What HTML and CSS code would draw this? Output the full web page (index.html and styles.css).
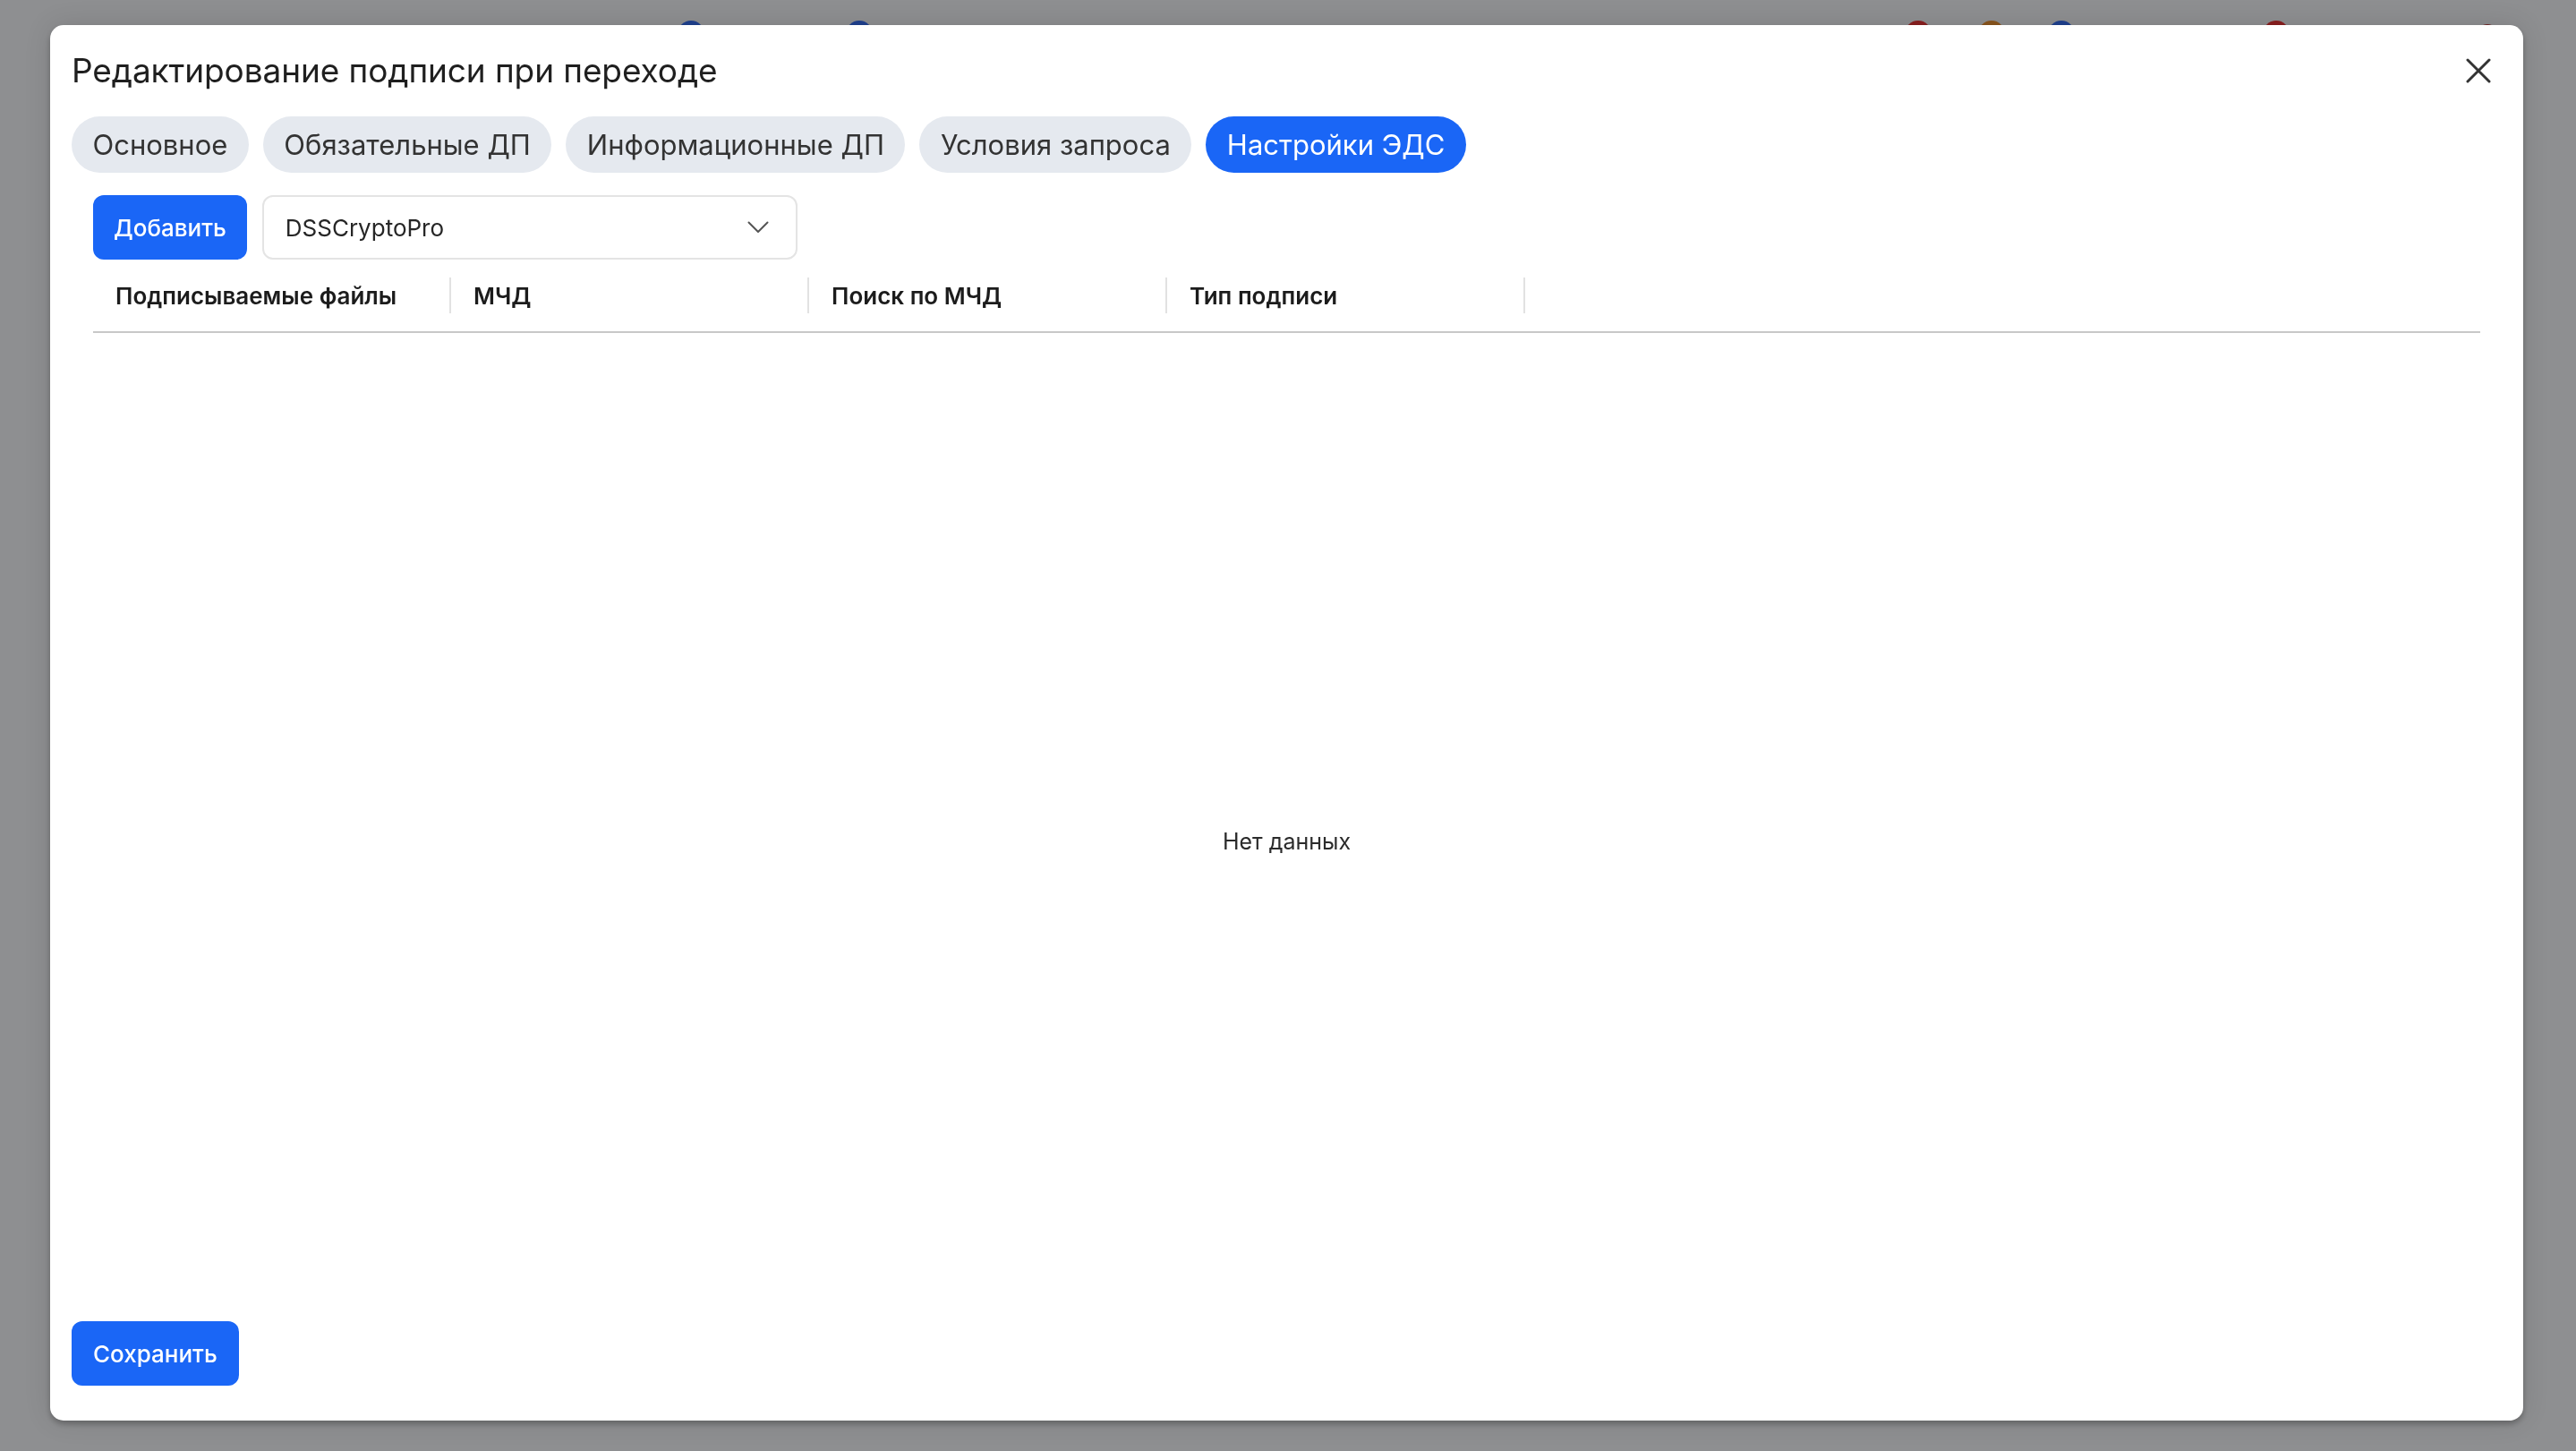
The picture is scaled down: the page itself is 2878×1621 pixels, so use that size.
FILE: index.html
```html
<!DOCTYPE html>
<html lang="ru">
<head>
<meta charset="utf-8">
<title>Редактирование подписи при переходе</title>
<link rel="stylesheet" href="styles.css">
</head>
<body>
<div class="page-behind">
  <div class="dots">
    <span class="dot dot-blue d1"></span>
    <span class="dot dot-blue d2"></span>
    <span class="dot dot-red d3"></span>
    <span class="dot dot-orange d4"></span>
    <span class="dot dot-blue d5"></span>
    <span class="dot dot-red d6"></span>
    <span class="dot dot-dark d7"></span>
  </div>
</div>
<div class="modal">
  <div class="modal-header">
    <h1 class="modal-title">Редактирование подписи при переходе</h1>
    <button class="close-btn" aria-label="Закрыть">
      <svg width="28" height="28" viewBox="0 0 28 28"><path d="M2 2 L26 26 M26 2 L2 26" stroke="#333" stroke-width="3" stroke-linecap="round" fill="none"/></svg>
    </button>
  </div>
  <div class="tabs">
    <button class="tab">Основное</button>
    <button class="tab">Обязательные ДП</button>
    <button class="tab">Информационные ДП</button>
    <button class="tab">Условия запроса</button>
    <button class="tab tab-active">Настройки ЭДС</button>
  </div>
  <div class="panel">
    <div class="toolbar">
      <button class="btn-primary">Добавить</button>
      <div class="select">
        <span class="select-value">DSSCryptoPro</span>
        <svg class="chevron" width="24" height="14" viewBox="0 0 24 14"><path d="M1.5 1.5 L12 12 L22.5 1.5" stroke="#555" stroke-width="2" fill="none" stroke-linecap="round" stroke-linejoin="round"/></svg>
      </div>
    </div>
    <div class="table">
      <div class="thead">
        <div class="th"><span class="th-text">Подписываемые файлы</span></div>
        <div class="th"><span class="th-text">МЧД</span></div>
        <div class="th"><span class="th-text">Поиск по МЧД</span></div>
        <div class="th"><span class="th-text">Тип подписи</span></div>
      </div>
      <div class="empty">Нет данных</div>
    </div>
  </div>
  <div class="footer">
    <button class="btn-primary btn-save">Сохранить</button>
  </div>
</div>
</body>
</html>
```
FILE: styles.css
```css
* { box-sizing: border-box; }
html, body {
  margin: 0;
  padding: 0;
  width: 2878px;
  height: 1621px;
  overflow: hidden;
}
body {
  background: #8e8f91;
  font-family: Inter, "Noto Sans", "Liberation Sans", sans-serif;
  color: #2b2b2b;
}
.page-behind {
  padding-top: 23px;
}
.dots {
  display: flex;
  align-items: flex-start;
}
.dot {
  width: 30px;
  height: 30px;
  border-radius: 50%;
  flex: none;
}
.dot-blue { background: #1f418f; }
.dot-red { background: #8a1f1f; }
.dot-orange { background: #8a551d; }
.dot-dark { background: #6e2424; }
.d1 { margin-left: 757px; }
.d2 { margin-left: 158px; }
.d3 { margin-left: 1153px; }
.d4 { margin-left: 52px; }
.d5 { margin-left: 48px; }
.d6 { margin-left: 210px; }
.d7 { margin-left: 210px; margin-top: 4px; width: 22px; height: 22px; }

.modal {
  position: fixed;
  left: 56px;
  top: 28px;
  width: 2763px;
  height: 1559px;
  background: #ffffff;
  border-radius: 15px;
  box-shadow: 0 4px 6px rgba(0,0,0,0.25), 0 0 30px rgba(0,0,0,0.12);
  padding: 0 24px;
  display: flex;
  flex-direction: column;
}
.modal-header {
  padding-top: 27px;
  display: flex;
  align-items: center;
  justify-content: space-between;
}
.modal-title {
  margin: 0;
  font-size: 37px;
  line-height: 48px;
  font-weight: 400;
  color: #1f1f1f;
  letter-spacing: -0.1px;
}
.close-btn {
  border: none;
  background: none;
  padding: 0;
  width: 28px;
  height: 28px;
  margin-right: 12px;
  display: flex;
  cursor: pointer;
}
.tabs {
  margin-top: 27px;
  display: flex;
  gap: 16px;
}
.tab {
  height: 63px;
  padding: 0 23.5px;
  border: none;
  border-radius: 32px;
  background: #e5e9ef;
  color: #333333;
  font-family: inherit;
  font-size: 31px;
  font-weight: 400;
  cursor: pointer;
}
.tab-active {
  background: #1a66f6;
  color: #ffffff;
}
.panel {
  flex: 1;
  padding: 25px 24px 0;
  display: flex;
  flex-direction: column;
}
.toolbar {
  display: flex;
  gap: 17px;
  height: 72px;
}
.btn-primary {
  height: 72px;
  padding: 0 24px;
  border: none;
  border-radius: 12px;
  background: #1a66f6;
  color: #ffffff;
  font-family: inherit;
  font-size: 26px;
  font-weight: 500;
  cursor: pointer;
}
.toolbar .btn-primary {
  padding: 0 23px;
}
.select {
  width: 598px;
  height: 72px;
  border: 2px solid #e4e4e4;
  border-radius: 12px;
  padding: 0 30px 0 24px;
  display: flex;
  align-items: center;
  justify-content: space-between;
  font-size: 26px;
  color: #262626;
}
.table {
  flex: 1;
  display: flex;
  flex-direction: column;
}
.thead {
  height: 82px;
  display: flex;
  border-bottom: 2px solid #c8c8c8;
}
.th {
  width: 400px;
  display: flex;
  align-items: center;
  padding-left: 25px;
  font-size: 26px;
  font-weight: 600;
  color: #1c1c1c;
}
.th-text { flex: 1; }
.th::after {
  content: "";
  width: 2px;
  height: 40px;
  background: #e2e2e2;
  flex: none;
}
.empty {
  flex: 1;
  display: flex;
  align-items: center;
  justify-content: center;
  padding-top: 32px;
  font-size: 25px;
  color: #2b2b2b;
}
.footer {
  padding-bottom: 39px;
}
.btn-save {
  font-size: 26px;
}
```
